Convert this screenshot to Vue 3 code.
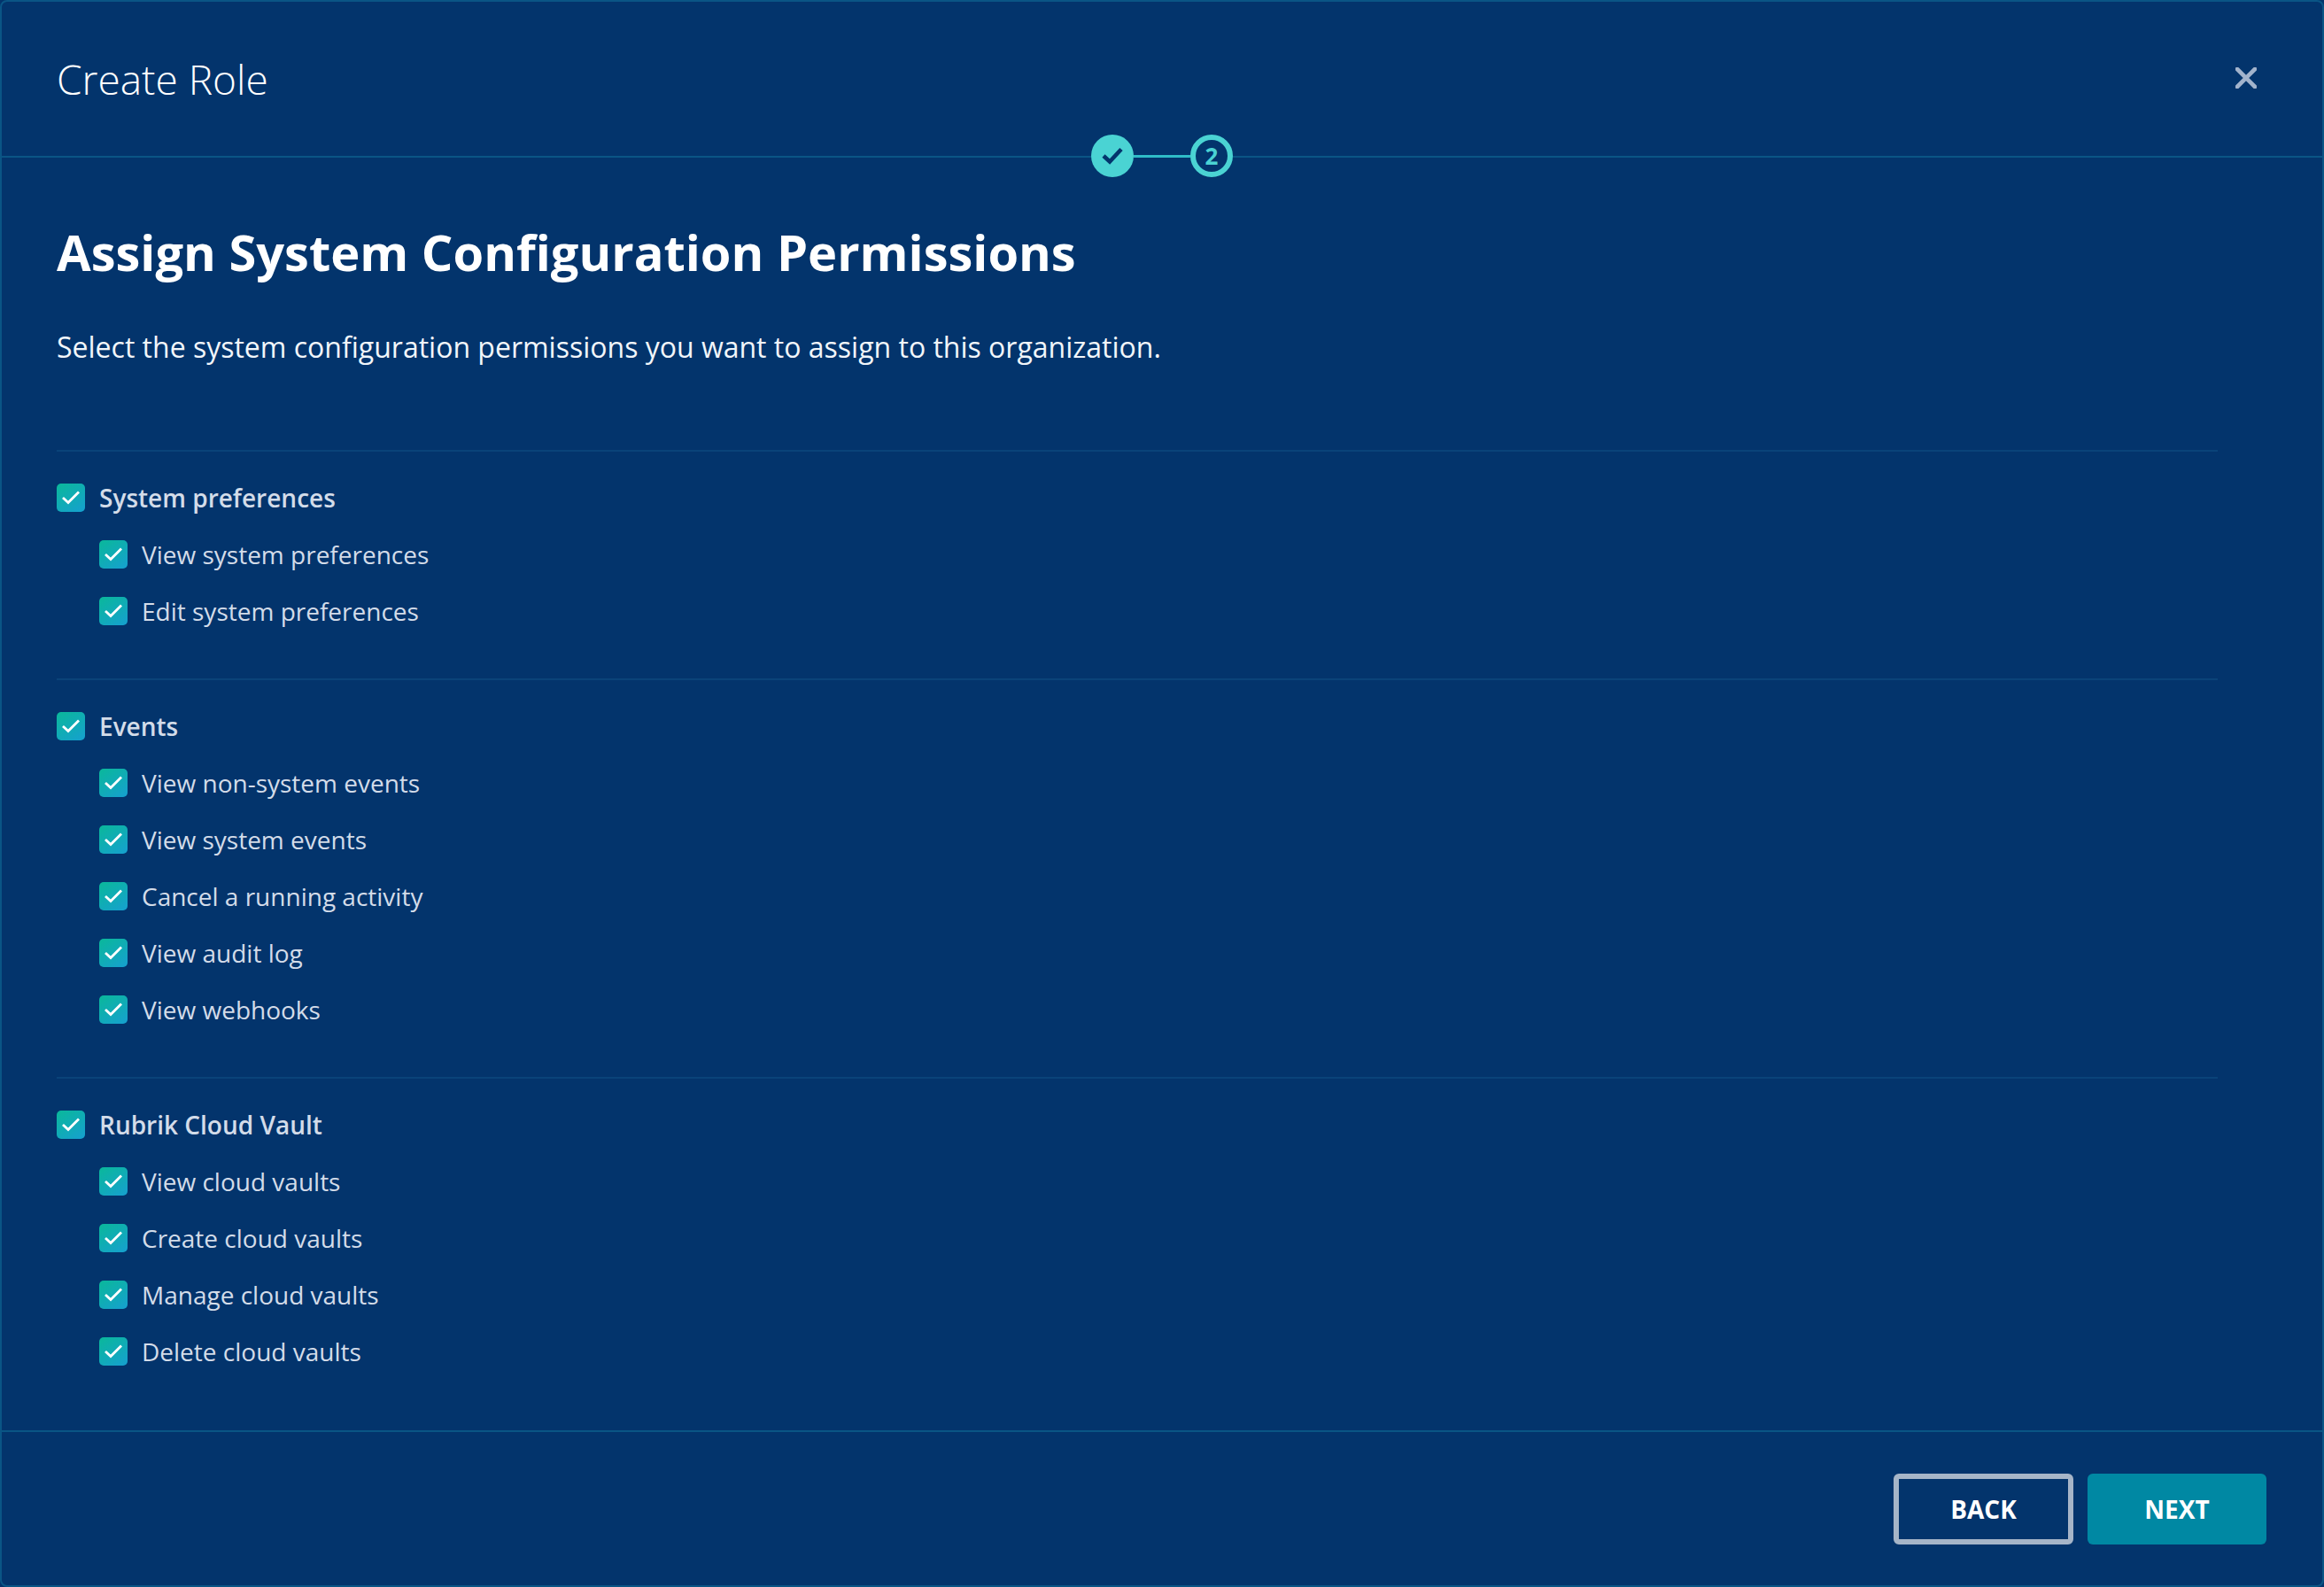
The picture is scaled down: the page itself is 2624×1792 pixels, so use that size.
<script setup>
const sections = [
  { title: 'System preferences', items: ['View system preferences', 'Edit system preferences'] },
  { title: 'Events', items: ['View non-system events', 'View system events', 'Cancel a running activity', 'View audit log', 'View webhooks'] },
  { title: 'Rubrik Cloud Vault', items: ['View cloud vaults', 'Create cloud vaults', 'Manage cloud vaults', 'Delete cloud vaults'] },
]
</script>

<template>
  <div class="modal">
    <header class="head">
      <h1 class="title">Create Role</h1>
      <svg class="close" width="24" height="24" viewBox="0 0 24 24"><path d="M2 2 22 22M22 2 2 22" stroke="#a2b3cc" stroke-width="4.6" stroke-linecap="round" fill="none"/></svg>
      <div class="stepper">
        <span class="step done">
          <svg width="24" height="20" viewBox="0 0 24 20"><path d="M2 10 9 16.5 22 2.5" stroke="#03346c" stroke-width="4.6" fill="none"/></svg>
        </span>
        <span class="link"></span>
        <span class="step current">2</span>
      </div>
    </header>
    <main class="body">
      <h2 class="heading">Assign System Configuration Permissions</h2>
      <p class="desc">Select the system configuration permissions you want to assign to this organization.</p>
      <section v-for="s in sections" :key="s.title" class="group">
        <label class="row parent">
          <span class="box"><svg width="22" height="18" viewBox="0 0 22 18"><path d="M2 9 8 14.5 20 2.5" stroke="#fff" stroke-width="2.8" fill="none"/></svg></span>
          <span>{{ s.title }}</span>
        </label>
        <label v-for="i in s.items" :key="i" class="row child">
          <span class="box"><svg width="22" height="18" viewBox="0 0 22 18"><path d="M2 9 8 14.5 20 2.5" stroke="#fff" stroke-width="2.8" fill="none"/></svg></span>
          <span>{{ i }}</span>
        </label>
      </section>
    </main>
    <footer class="foot">
      <button class="btn back">BACK</button>
      <button class="btn next">NEXT</button>
    </footer>
  </div>
</template>

<style>
html, body { margin: 0; background: #03346c; }
</style>

<style scoped>
.modal {
  width: 2624px;
  height: 1792px;
  box-sizing: border-box;
  border: 2px solid #0a5585;
  border-radius: 8px;
  background: #03346c;
  display: flex;
  flex-direction: column;
  font-family: "Open Sans", sans-serif;
  color: #fff;
}
.head {
  position: relative;
  height: 176px;
  flex: none;
  box-sizing: border-box;
  border-bottom: 2px solid #0a5585;
  display: flex;
  align-items: center;
  justify-content: space-between;
  padding: 0 74px 0 62px;
}
.title {
  margin: 0;
  font-size: 46px;
  font-weight: 300;
  line-height: 1;
}
.close { position: relative; top: -1px; }
.stepper {
  position: absolute;
  left: 1230px;
  top: 150px;
  display: flex;
  align-items: center;
}
.step {
  width: 48px;
  height: 48px;
  box-sizing: border-box;
  border-radius: 50%;
  display: flex;
  align-items: center;
  justify-content: center;
}
.done { background: #4ad3d3; }
.current {
  border: 6px solid #4ad3d3;
  background: #03346c;
  color: #4ad3d3;
  font-size: 26px;
  font-weight: 700;
}
.link { width: 64px; height: 3px; background: #2fbcc8; }
.body {
  flex: 1;
  padding: 0 118px 0 62px;
}
.heading {
  margin: 0;
  padding-top: 72px;
  font-size: 56px;
  line-height: 68px;
  font-weight: 700;
}
.desc {
  margin: 52px 0 0;
  font-size: 32px;
  line-height: 44px;
  color: #f2f6fa;
}
.group {
  border-top: 2px solid #0a4379;
  padding: 20px 0 44px;
}
.desc + .group { margin-top: 94px; }
.row {
  height: 64px;
  display: flex;
  align-items: center;
  font-size: 28px;
  color: #d3dce9;
}
.parent { font-weight: 600; gap: 16px; }
.child { padding-left: 48px; gap: 16px; }
.box {
  width: 32px;
  height: 32px;
  flex: none;
  border-radius: 5px;
  background: linear-gradient(145deg, #0ab89a, #16a0d0);
  display: flex;
  align-items: center;
  justify-content: center;
}
.foot {
  flex: none;
  height: 175px;
  box-sizing: border-box;
  border-top: 2px solid #0a5585;
  display: flex;
  justify-content: flex-end;
  align-items: flex-start;
  gap: 16px;
  padding: 47px 63px 0 0;
}
.btn {
  height: 80px;
  width: 203px;
  box-sizing: border-box;
  border-radius: 6px;
  font: 700 28px "Open Sans", sans-serif;
  color: #fff;
}
.back { background: transparent; border: 6px solid #a6b5c8; }
.next { background: #0088a3; border: 0; width: 202px; }
</style>
